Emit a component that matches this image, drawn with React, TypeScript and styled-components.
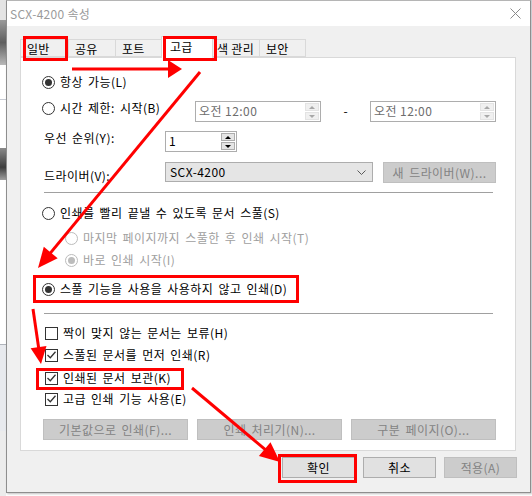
import React from 'react'
import styled, { createGlobalStyle } from 'styled-components'

const GlobalStyle = createGlobalStyle`
  html, body {
    margin: 0;
    padding: 0;
    background: #ffffff;
  }
  body {
    font-family: "Noto Sans CJK KR", "Noto Sans", sans-serif;
    font-size: 12px;
    color: #000;
  }
`

const Screen = styled.div`
  position: relative;
  width: 532px;
  height: 496px;
  overflow: hidden;
  display: flex;
  align-items: flex-start;
  background: #ffffff;
`

const BackWindow = styled.div`
  width: 6px;
  height: 496px;
  flex: none;
  display: flex;
  flex-direction: column;
  overflow: hidden;
`

const BackBlock = styled.div<{ $h: number; $bg: string }>`
  height: ${({ $h }) => $h}px;
  background: ${({ $bg }) => $bg};
  flex: none;
`

const RightEdge = styled.div`
  width: 1px;
  height: 430px;
  flex: none;
  background: #c9ccd2;
`

const Dialog = styled.div`
  width: 525px;
  height: 493px;
  flex: none;
  box-sizing: border-box;
  display: flex;
  flex-direction: column;
  background: #f0f0f0;
  border: 1px solid #8e8e8e;
  border-top: 1px solid #b5b5b5;
  box-shadow: 1px 1px 2px rgba(0, 0, 0, 0.25);
`

const TitleBar = styled.div`
  height: 25px;
  flex: none;
  display: flex;
  align-items: center;
  justify-content: space-between;
  padding: 0 9px 0 3px;
  background: #ffffff;
`

const Title = styled.span`
  color: #9a9a9a;
  font-size: 12px;
  letter-spacing: 0.3px;
`

const TabBar = styled.div`
  height: 21px;
  margin-top: 10px;
  padding-left: 13px;
  display: flex;
  align-items: flex-end;
  flex: none;
`

const Tab = styled.div<{ $w: number; $active?: boolean }>`
  position: relative;
  box-sizing: border-box;
  width: ${({ $w, $active }) => ($active ? $w + 4 : $w)}px;
  height: ${({ $active }) => ($active ? 22 : 18)}px;
  margin: ${({ $active }) => ($active ? '0 -2px -1px -3px' : '0 0 0 -1px')};
  padding-left: ${({ $active }) => ($active ? 8 : 6)}px;
  line-height: ${({ $active }) => ($active ? 20 : 17)}px;
  letter-spacing: 0.3px;
  background: ${({ $active }) => ($active ? '#ffffff' : '#f0f0f0')};
  border: 1px solid #d9d9d9;
  border-bottom: ${({ $active }) => ($active ? 'none' : '1px solid #d9d9d9')};
  z-index: ${({ $active }) => ($active ? 2 : 1)};
  white-space: nowrap;
  &:first-child {
    margin-left: 0;
  }
`

const Panel = styled.div`
  box-sizing: border-box;
  width: 496px;
  height: 394px;
  margin-left: 13px;
  padding: 14px 18px 0 21px;
  background: #ffffff;
  border: 1px solid #d9d9d9;
  display: flex;
  flex-direction: column;
  flex: none;
`

const Row = styled.div<{ $mt: number; $indent?: number; $h?: number; $top?: boolean }>`
  display: flex;
  align-items: ${({ $top }) => ($top ? 'flex-start' : 'center')};
  height: ${({ $h }) => $h ?? 20}px;
  margin-top: ${({ $mt }) => $mt}px;
  padding-left: ${({ $indent }) => $indent ?? 0}px;
  flex: none;
`

const Label = styled.span<{ $disabled?: boolean }>`
  line-height: 20px;
  white-space: nowrap;
  word-spacing: 2px;
  letter-spacing: 0.45px;
  color: ${({ $disabled }) => ($disabled ? '#a0a0a0' : '#000')};
`

const Cell = styled.div<{ $w: number; $pl?: number; $mt?: number }>`
  width: ${({ $w }) => $w}px;
  flex: none;
  display: flex;
  align-items: center;
  padding-left: ${({ $pl }) => $pl ?? 0}px;
  margin-top: ${({ $mt }) => $mt ?? 0}px;
  box-sizing: border-box;
  height: 20px;
`

const RadioCircle = styled.span<{ $disabled?: boolean; $checked?: boolean }>`
  box-sizing: border-box;
  width: 13px;
  height: 13px;
  flex: none;
  margin-right: 5px;
  border-radius: 50%;
  border: 1px solid ${({ $disabled }) => ($disabled ? '#bcbcbc' : '#333333')};
  background: #ffffff;
  display: flex;
  align-items: center;
  justify-content: center;
  &::after {
    content: '';
    display: ${({ $checked }) => ($checked ? 'block' : 'none')};
    width: 7px;
    height: 7px;
    border-radius: 50%;
    background: ${({ $disabled }) => ($disabled ? '#bcbcbc' : '#333333')};
  }
`

const CheckBox = styled.span`
  box-sizing: border-box;
  width: 13px;
  height: 13px;
  flex: none;
  margin-right: 5px;
  border: 1px solid #333333;
  background: #ffffff;
  display: flex;
  align-items: center;
  justify-content: center;
`

const Field = styled.div<{ $w: number; $mt?: number }>`
  box-sizing: border-box;
  width: ${({ $w }) => $w}px;
  height: 21px;
  margin-top: ${({ $mt }) => $mt ?? 0}px;
  flex: none;
  display: flex;
  align-items: stretch;
  border: 1px solid #adadad;
  background: #ffffff;
`

const FieldText = styled.span<{ $disabled?: boolean }>`
  flex: 1;
  padding-left: 3px;
  line-height: 18px;
  letter-spacing: 0.45px;
  color: ${({ $disabled }) => ($disabled ? '#6d6d6d' : '#000')};
`

const Spinner = styled.div`
  width: 14px;
  margin: 1px;
  display: flex;
  flex-direction: column;
  gap: 1px;
`

const SpinHalf = styled.div<{ $disabled?: boolean }>`
  flex: 1;
  display: flex;
  align-items: center;
  justify-content: center;
  background: ${({ $disabled }) => ($disabled ? '#f0f0f0' : '#e5e5e5')};
  border: 1px solid ${({ $disabled }) => ($disabled ? '#e3e3e3' : '#adadad')};
`

const Tri = styled.span<{ $down?: boolean; $disabled?: boolean }>`
  width: 0;
  height: 0;
  border-left: 3px solid transparent;
  border-right: 3px solid transparent;
  ${({ $down, $disabled }) =>
    $down
      ? `border-top: 3px solid ${$disabled ? '#a8a8a8' : '#000'};`
      : `border-bottom: 3px solid ${$disabled ? '#a8a8a8' : '#000'};`}
`

const Dash = styled.span`
  width: 49px;
  flex: none;
  text-align: center;
  line-height: 20px;
  margin-top: 3px;
`

const Select = styled.div`
  box-sizing: border-box;
  width: 208px;
  height: 20px;
  flex: none;
  display: flex;
  align-items: center;
  justify-content: space-between;
  padding: 0 6px 0 4px;
  background: #e5e5e5;
  border: 1px solid #adadad;
`

const Separator = styled.div<{ $mt: number }>`
  width: 449px;
  height: 1px;
  margin: ${({ $mt }) => $mt}px 0 0 2px;
  background: #a0a0a0;
  flex: none;
`

const PushButton = styled.div<{ $w: number; $disabled?: boolean; $ml?: number }>`
  box-sizing: border-box;
  width: ${({ $w }) => $w}px;
  height: 21px;
  margin-left: ${({ $ml }) => $ml ?? 0}px;
  flex: none;
  display: flex;
  align-items: center;
  justify-content: center;
  white-space: nowrap;
  word-spacing: 2px;
  letter-spacing: 0.45px;
  background: ${({ $disabled }) => ($disabled ? '#cccccc' : '#e1e1e1')};
  border: 1px solid ${({ $disabled }) => ($disabled ? '#bfbfbf' : '#adadad')};
  color: ${({ $disabled }) => ($disabled ? '#838383' : '#000')};
`

const ButtonRow = styled.div<{ $mt: number; $gap: number; $pl?: number; $end?: boolean }>`
  display: flex;
  gap: ${({ $gap }) => $gap}px;
  margin-top: ${({ $mt }) => $mt}px;
  padding-left: ${({ $pl }) => $pl ?? 0}px;
  padding-right: ${({ $end }) => ($end ? 13 : 0)}px;
  justify-content: ${({ $end }) => ($end ? 'flex-end' : 'flex-start')};
  flex: none;
`

const Overlay = styled.svg`
  position: absolute;
  left: 0;
  top: 0;
  width: 532px;
  height: 496px;
  pointer-events: none;
  z-index: 10;
`

const tabs = [
  { label: '일반', w: 49 },
  { label: '공유', w: 48 },
  { label: '포트', w: 49 },
  { label: '고급', w: 48, active: true },
  { label: '색 관리', w: 50 },
  { label: '보안', w: 47 },
]

const Radio = ({ label, checked, disabled }: { label: string; checked?: boolean; disabled?: boolean }) => (
  <>
    <RadioCircle $checked={checked} $disabled={disabled} />
    <Label $disabled={disabled}>{label}</Label>
  </>
)

const Check = ({ label, checked }: { label: string; checked?: boolean }) => (
  <>
    <CheckBox>
      {checked && (
        <svg width="9" height="8" viewBox="0 0 9 8">
          <polyline points="0.5,4 3.3,6.8 8.5,0.8" fill="none" stroke="#333" strokeWidth="1.3" />
        </svg>
      )}
    </CheckBox>
    <Label>{label}</Label>
  </>
)

const SpinField = ({ w, value, disabled, mt }: { w: number; value: string; disabled?: boolean; mt?: number }) => (
  <Field $w={w} $mt={mt}>
    <FieldText $disabled={disabled}>{value}</FieldText>
    <Spinner>
      <SpinHalf $disabled={disabled}>
        <Tri $disabled={disabled} />
      </SpinHalf>
      <SpinHalf $disabled={disabled}>
        <Tri $down $disabled={disabled} />
      </SpinHalf>
    </Spinner>
  </Field>
)

const Arrow = ({ x1, y1, x2, y2, len = 18, half = 9 }: { x1: number; y1: number; x2: number; y2: number; len?: number; half?: number }) => {
  const dx = x2 - x1
  const dy = y2 - y1
  const d = Math.hypot(dx, dy)
  const ux = dx / d
  const uy = dy / d
  const bx = x2 - ux * len
  const by = y2 - uy * len
  const nx = -uy * half
  const ny = ux * half
  return (
    <g>
      <line x1={x1} y1={y1} x2={bx + ux * 2} y2={by + uy * 2} stroke="#ff0000" strokeWidth="3" />
      <polygon points={`${x2},${y2} ${bx + nx},${by + ny} ${bx - nx},${by - ny}`} fill="#ff0000" />
    </g>
  )
}

const Box = ({ x1, y1, x2, y2 }: { x1: number; y1: number; x2: number; y2: number }) => (
  <rect x={x1 + 1.5} y={y1 + 1.5} width={x2 - x1 - 3} height={y2 - y1 - 3} fill="none" stroke="#ff0000" strokeWidth="3" />
)

export default function App() {
  return (
    <>
      <GlobalStyle />
      <Screen>
        <BackWindow>
          <BackBlock $h={20} $bg="#e4e4e4" />
          <BackBlock $h={45} $bg="linear-gradient(#9a9a9a, #5e5e5e 50%, #b9b9b9)" />
          <BackBlock $h={34} $bg="#ffffff" />
          <BackBlock $h={1} $bg="#c8ccd4" />
          <BackBlock $h={48} $bg="#ffffff" />
          <BackBlock $h={32} $bg="linear-gradient(#8a8a8a, #3d3d3d 60%, #a0a0a0)" />
          <BackBlock $h={164} $bg="#ffffff" />
          <BackBlock $h={1} $bg="#b0b4bb" />
          <BackBlock $h={86} $bg="#e8eaee" />
          <BackBlock $h={65} $bg="#ececec" />
        </BackWindow>
        <Dialog>
          <TitleBar>
            <Title>SCX-4200 속성</Title>
            <svg width="11" height="11" viewBox="0 0 11 11">
              <path d="M0.5 0.5 L10.5 10.5 M10.5 0.5 L0.5 10.5" stroke="#8a8a8a" strokeWidth="1" />
            </svg>
          </TitleBar>
          <TabBar>
            {tabs.map((t) => (
              <Tab key={t.label} $w={t.w} $active={t.active}>
                {t.label}
              </Tab>
            ))}
          </TabBar>
          <Panel>
            <Row $mt={0}>
              <Radio label="항상 가능(L)" checked />
            </Row>
            <Row $mt={6} $h={24} $top>
              <Cell $w={153}>
                <Radio label="시간 제한: 시작(B)" />
              </Cell>
              <SpinField w={126} value="오전 12:00" disabled mt={3} />
              <Dash>-</Dash>
              <SpinField w={126} value="오전 12:00" disabled mt={3} />
            </Row>
            <Row $mt={6} $h={24} $top>
              <Cell $w={123} $pl={2}>
                <Label>우선 순위(Y):</Label>
              </Cell>
              <SpinField w={72} value="1" mt={3} />
            </Row>
            <Row $mt={10} $h={24} $top>
              <Cell $w={123} $pl={2} $mt={4}>
                <Label>드라이버(V):</Label>
              </Cell>
              <Select>
                <Label>SCX-4200</Label>
                <svg width="9" height="5" viewBox="0 0 9 5">
                  <polyline points="0.5,0.5 4.5,4.5 8.5,0.5" fill="none" stroke="#5a5a5a" strokeWidth="1" />
                </svg>
              </Select>
              <PushButton $w={113} $disabled $ml={10}>
                새 드라이버(W)...
              </PushButton>
            </Row>
            <Separator $mt={6} />
            <Row $mt={10}>
              <Radio label="인쇄를 빨리 끝낼 수 있도록 문서 스풀(S)" />
            </Row>
            <Row $mt={5} $indent={23}>
              <Radio label="마지막 페이지까지 스풀한 후 인쇄 시작(T)" disabled />
            </Row>
            <Row $mt={2} $indent={23}>
              <Radio label="바로 인쇄 시작(I)" disabled checked />
            </Row>
            <Row $mt={9}>
              <Radio label="스풀 기능을 사용을 사용하지 않고 인쇄(D)" checked />
            </Row>
            <Separator $mt={14} />
            <Row $mt={9} $indent={3}>
              <Check label="짝이 맞지 않는 문서는 보류(H)" />
            </Row>
            <Row $mt={2} $indent={3}>
              <Check label="스풀된 문서를 먼저 인쇄(R)" checked />
            </Row>
            <Row $mt={3} $indent={3}>
              <Check label="인쇄된 문서 보관(K)" checked />
            </Row>
            <Row $mt={1} $indent={3}>
              <Check label="고급 인쇄 기능 사용(E)" checked />
            </Row>
            <ButtonRow $mt={10} $gap={9} $pl={1}>
              <PushButton $w={145} $disabled>
                기본값으로 인쇄(F)...
              </PushButton>
              <PushButton $w={145} $disabled>
                인쇄 처리기(N)...
              </PushButton>
              <PushButton $w={145} $disabled>
                구분 페이지(O)...
              </PushButton>
            </ButtonRow>
          </Panel>
          <ButtonRow $mt={6} $gap={8} $end>
            <PushButton $w={73}>확인</PushButton>
            <PushButton $w={73}>취소</PushButton>
            <PushButton $w={73} $disabled>
              적용(A)
            </PushButton>
          </ButtonRow>
        </Dialog>
        <RightEdge />
        <Overlay viewBox="0 0 532 496">
          <Box x1={23} y1={36} x2={68} y2={61} />
          <Box x1={163} y1={36} x2={217} y2={61} />
          <Box x1={33} y1={275} x2={299} y2={303} />
          <Box x1={36} y1={368} x2={184} y2={390} />
          <Box x1={278} y1={454} x2={357} y2={483} />
          <Arrow x1={72} y1={69} x2={182} y2={69} len={14} />
          <Arrow x1={200} y1={72} x2={38} y2={268} len={20} />
          <Arrow x1={33} y1={309} x2={41} y2={364} len={17} half={8} />
          <Arrow x1={192} y1={388} x2={280} y2={462} len={20} />
        </Overlay>
      </Screen>
    </>
  )
}
